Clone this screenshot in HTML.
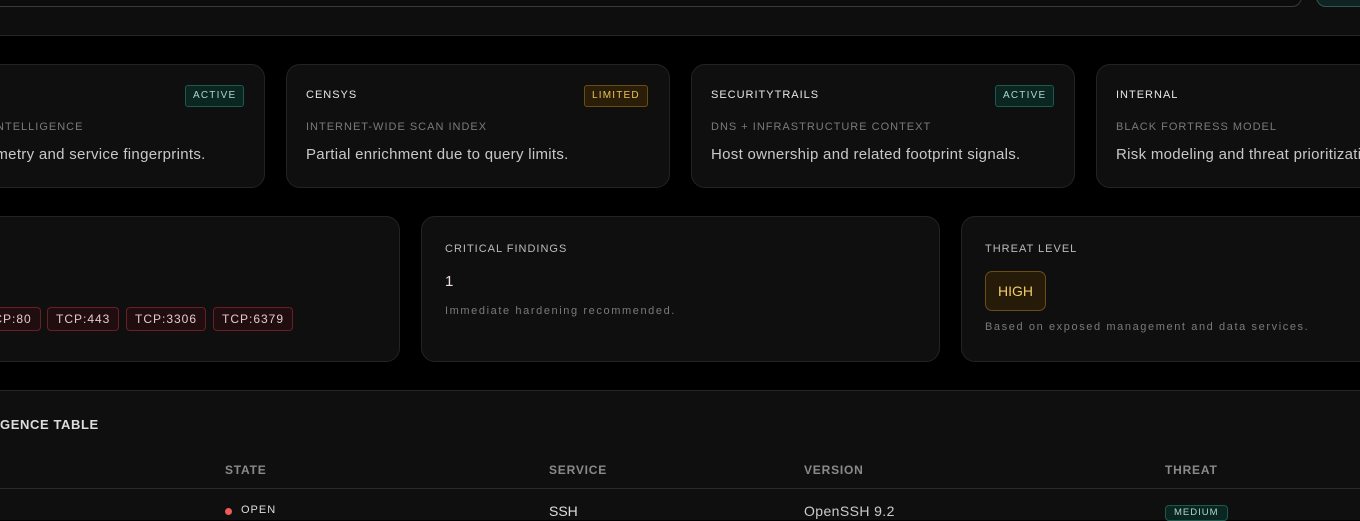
<!DOCTYPE html>
<html><head><meta charset="utf-8"><style>
*{box-sizing:border-box;margin:0;padding:0}
body{width:1360px;height:520px;background:#000;overflow:hidden;position:relative;font-family:"Liberation Sans",sans-serif;color:#ddd}
.a{position:absolute}
.card{position:absolute;background:#0f0f0f;border:1px solid #232323;border-radius:14px}
.t{position:absolute;font-size:11px;letter-spacing:1px;color:#e6e6e6}
.s{position:absolute;font-size:11px;letter-spacing:1px;color:#7a7a7a}
.d{position:absolute;font-size:15px;letter-spacing:0.3px;color:#c8c8c8;white-space:nowrap}
.b{position:absolute;font-size:10px;letter-spacing:1.2px;padding:0 7px;height:22px;line-height:20px;border-radius:3px;border:1px solid}
.act{background:#0b2520;border-color:#1c5a4d;color:#a8d8cc}
.lim{color:#e8c35a;background:#2a1e08;border-color:#6b4d12}
.p{position:absolute;top:307px;height:24px;line-height:22px;font-size:12px;letter-spacing:1px;color:#e8c8c8;background:#200d0f;border:1px solid #6a1f24;border-radius:4px;padding:0 8px}
.h{position:absolute;top:463px;font-size:12px;font-weight:bold;letter-spacing:0.8px;color:#8a8a8a}
.m{position:absolute;font-size:11px;letter-spacing:1.6px;color:#7a7a7a;white-space:nowrap}
</style></head><body>
<div class="a" style="left:0;top:0;width:1360px;height:36px;background:#0e0e0e;border-bottom:1px solid #262626"></div>
<div class="a" style="left:-20px;top:-20px;width:1322px;height:27px;border:1px solid #3a3a3a;border-radius:10px;background:#0c0c0c"></div>
<div class="a" style="left:1316px;top:-20px;width:80px;height:27px;border:1px solid #2a5a55;border-radius:10px;background:#122"></div>

<div class="card" style="left:-140px;top:64px;width:405px;height:124px"></div>
<div class="b act" style="left:185px;top:85px">ACTIVE</div>
<div class="s" style="left:-8px;top:121px">INTELLIGENCE</div>
<div class="d" style="left:-30px;top:146px">telemetry and service fingerprints.</div>

<div class="card" style="left:286px;top:64px;width:384px;height:124px"></div>
<div class="t" style="left:306px;top:89px">CENSYS</div>
<div class="b lim" style="left:584px;top:85px">LIMITED</div>
<div class="s" style="left:306px;top:121px">INTERNET-WIDE SCAN INDEX</div>
<div class="d" style="left:306px;top:146px">Partial enrichment due to query limits.</div>

<div class="card" style="left:691px;top:64px;width:384px;height:124px"></div>
<div class="t" style="left:711px;top:89px">SECURITYTRAILS</div>
<div class="b act" style="left:995px;top:85px">ACTIVE</div>
<div class="s" style="left:711px;top:121px">DNS + INFRASTRUCTURE CONTEXT</div>
<div class="d" style="left:711px;top:146px">Host ownership and related footprint signals.</div>

<div class="card" style="left:1096px;top:64px;width:384px;height:124px"></div>
<div class="t" style="left:1116px;top:89px">INTERNAL</div>
<div class="s" style="left:1116px;top:121px">BLACK FORTRESS MODEL</div>
<div class="d" style="left:1116px;top:146px">Risk modeling and threat prioritization.</div>

<div class="card" style="left:-140px;top:216px;width:540px;height:146px"></div>
<div class="p" style="left:-24px">TCP:80</div>
<div class="p" style="left:47px">TCP:443</div>
<div class="p" style="left:126px">TCP:3306</div>
<div class="p" style="left:213px">TCP:6379</div>

<div class="card" style="left:421px;top:216px;width:519px;height:146px"></div>
<div class="t" style="left:445px;top:243px;color:#bbb">CRITICAL FINDINGS</div>
<div class="a" style="left:445px;top:273px;font-size:15px;color:#f0dede">1</div>
<div class="m" style="left:445px;top:305px">Immediate hardening recommended.</div>

<div class="card" style="left:961px;top:216px;width:480px;height:146px"></div>
<div class="t" style="left:985px;top:243px;color:#bbb">THREAT LEVEL</div>
<div class="a" style="left:985px;top:271px;width:61px;height:40px;border:1px solid #6b4d12;background:#261a08;border-radius:7px;color:#f0cc66;font-size:14px;text-align:center;line-height:38px">HIGH</div>
<div class="m" style="left:985px;top:321px">Based on exposed management and data services.</div>

<div class="a" style="left:0;top:390px;width:1360px;height:130px;background:#0f0f0f;border-top:1px solid #262626"></div>
<div class="a" style="left:0;top:417px;font-size:13px;font-weight:bold;letter-spacing:0.6px;color:#ddd">GENCE TABLE</div>
<div class="h" style="left:225px">STATE</div>
<div class="h" style="left:549px">SERVICE</div>
<div class="h" style="left:804px">VERSION</div>
<div class="h" style="left:1165px">THREAT</div>
<div class="a" style="left:0;top:488px;width:1360px;height:1px;background:#2a2a2a"></div>
<div class="a" style="left:225px;top:508px;width:7px;height:7px;border-radius:50%;background:#f05a5a"></div>
<div class="a" style="left:241px;top:504px;font-size:11px;letter-spacing:1px;color:#ddd">OPEN</div>
<div class="a" style="left:549px;top:503px;font-size:14px;color:#ddd">SSH</div>
<div class="a" style="left:804px;top:503px;font-size:14px;letter-spacing:0.4px;color:#ccc">OpenSSH 9.2</div>
<div class="a" style="left:1165px;top:505px;height:16px;padding:0 8px;line-height:14px;font-size:9.5px;letter-spacing:1px;color:#a8d8cc;background:#0b2520;border:1px solid #1c5a4d;border-radius:4px">MEDIUM</div>
</body></html>
